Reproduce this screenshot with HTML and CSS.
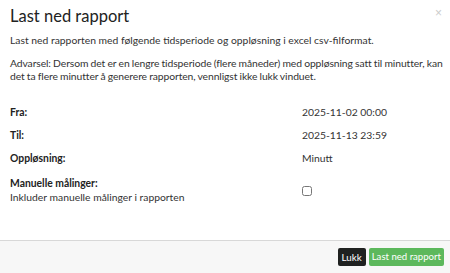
FILE: index.html
```html
<!DOCTYPE html>
<html lang="no">
<head>
  <meta charset="UTF-8">
  <title>Last ned rapport</title>
  <link rel="stylesheet" href="styles.css">
</head>
<body>
  <div class="modal">
    <header class="modal-header">
      <h4>Last ned rapport</h4>
      <button class="close" type="button">&times;</button>
    </header>

    <main class="modal-body">
      <p>Last ned rapporten med følgende tidsperiode og oppløsning i excel csv-filformat.</p>
      <p class="warning">Advarsel: Dersom det er en lengre tidsperiode (flere måneder) med oppløsning satt til minutter, kan det ta flere minutter å generere rapporten, vennligst ikke lukk vinduet.</p>

      <div class="fields">
        <div class="field-label">Fra:</div>
        <div class="field-value">2025-11-02 00:00</div>

        <div class="field-label">Til:</div>
        <div class="field-value">2025-11-13 23:59</div>

        <div class="field-label">Oppløsning:</div>
        <div class="field-value">Minutt</div>

        <div class="field-label last">
          Manuelle målinger:
          <span class="hint">Inkluder manuelle målinger i rapporten</span>
        </div>
        <div class="field-value check last"><input type="checkbox" id="manual"></div>
      </div>
    </main>

    <footer class="modal-footer">
      <button class="btn btn-dark" type="button">Lukk</button>
      <button class="btn btn-green" type="button">Last ned rapport</button>
    </footer>
  </div>
</body>
</html>
```

FILE: styles.css
```css
/* Modal layout */
body {
  margin: 0;
  font-family: Lato, "Open Sans", sans-serif;
  font-size: 10.35px;
  color: #333;
  background: #fff;
}
.modal {
  width: 450px;
  height: 273px;
  display: flex;
  flex-direction: column;
  background: #fff;
}
.modal-header {
  position: relative;
  padding: 5px 10px 0;
}
.modal-header h4 {
  margin: 0;
  font-size: 16.5px;
  font-weight: normal;
  color: #222;
  line-height: 22px;
}
.close {
  position: absolute;
  top: 6px;
  right: 8px;
  border: none;
  background: none;
  color: #ccc;
  font-size: 12px;
  padding: 0;
  cursor: pointer;
}
.modal-body {
  flex: 1;
  padding: 7px 0 0 10px;
}
.modal-body p {
  margin: 0 0 10px;
  line-height: 13px;
}
.warning {
  letter-spacing: -0.1px;
  word-spacing: -0.3px;
}
.fields {
  display: grid;
  grid-template-columns: 292px 1fr;
  row-gap: 10px;
  margin-top: 23px;
}
.field-label {
  font-weight: bold;
  color: #222;
  line-height: 13px;
}
.field-value {
  line-height: 13px;
}
.last {
  margin-top: 2px;
}
.hint {
  display: block;
  font-weight: normal;
  color: #333;
  margin-top: 1px;
}
.check {
  display: flex;
  align-items: center;
}
.check input {
  margin: 0;
  width: 10px;
  height: 10px;
}
.modal-footer {
  border-top: 1px solid #d8d8d8;
  background: #f7f7f7;
  padding: 7px 6px 7px;
  display: flex;
  justify-content: flex-end;
  gap: 3px;
}
.btn {
  border: none;
  border-radius: 2px;
  font-family: Lato, sans-serif;
  font-size: 9.8px;
  color: #fff;
  padding: 3px 3px;
  line-height: 12px;
  cursor: pointer;
}
.btn-dark {
  background: #1f2120;
  padding: 3px 4px;
}
.btn-green {
  background: #5cb85c;
  font-size: 9.6px;
}
```
